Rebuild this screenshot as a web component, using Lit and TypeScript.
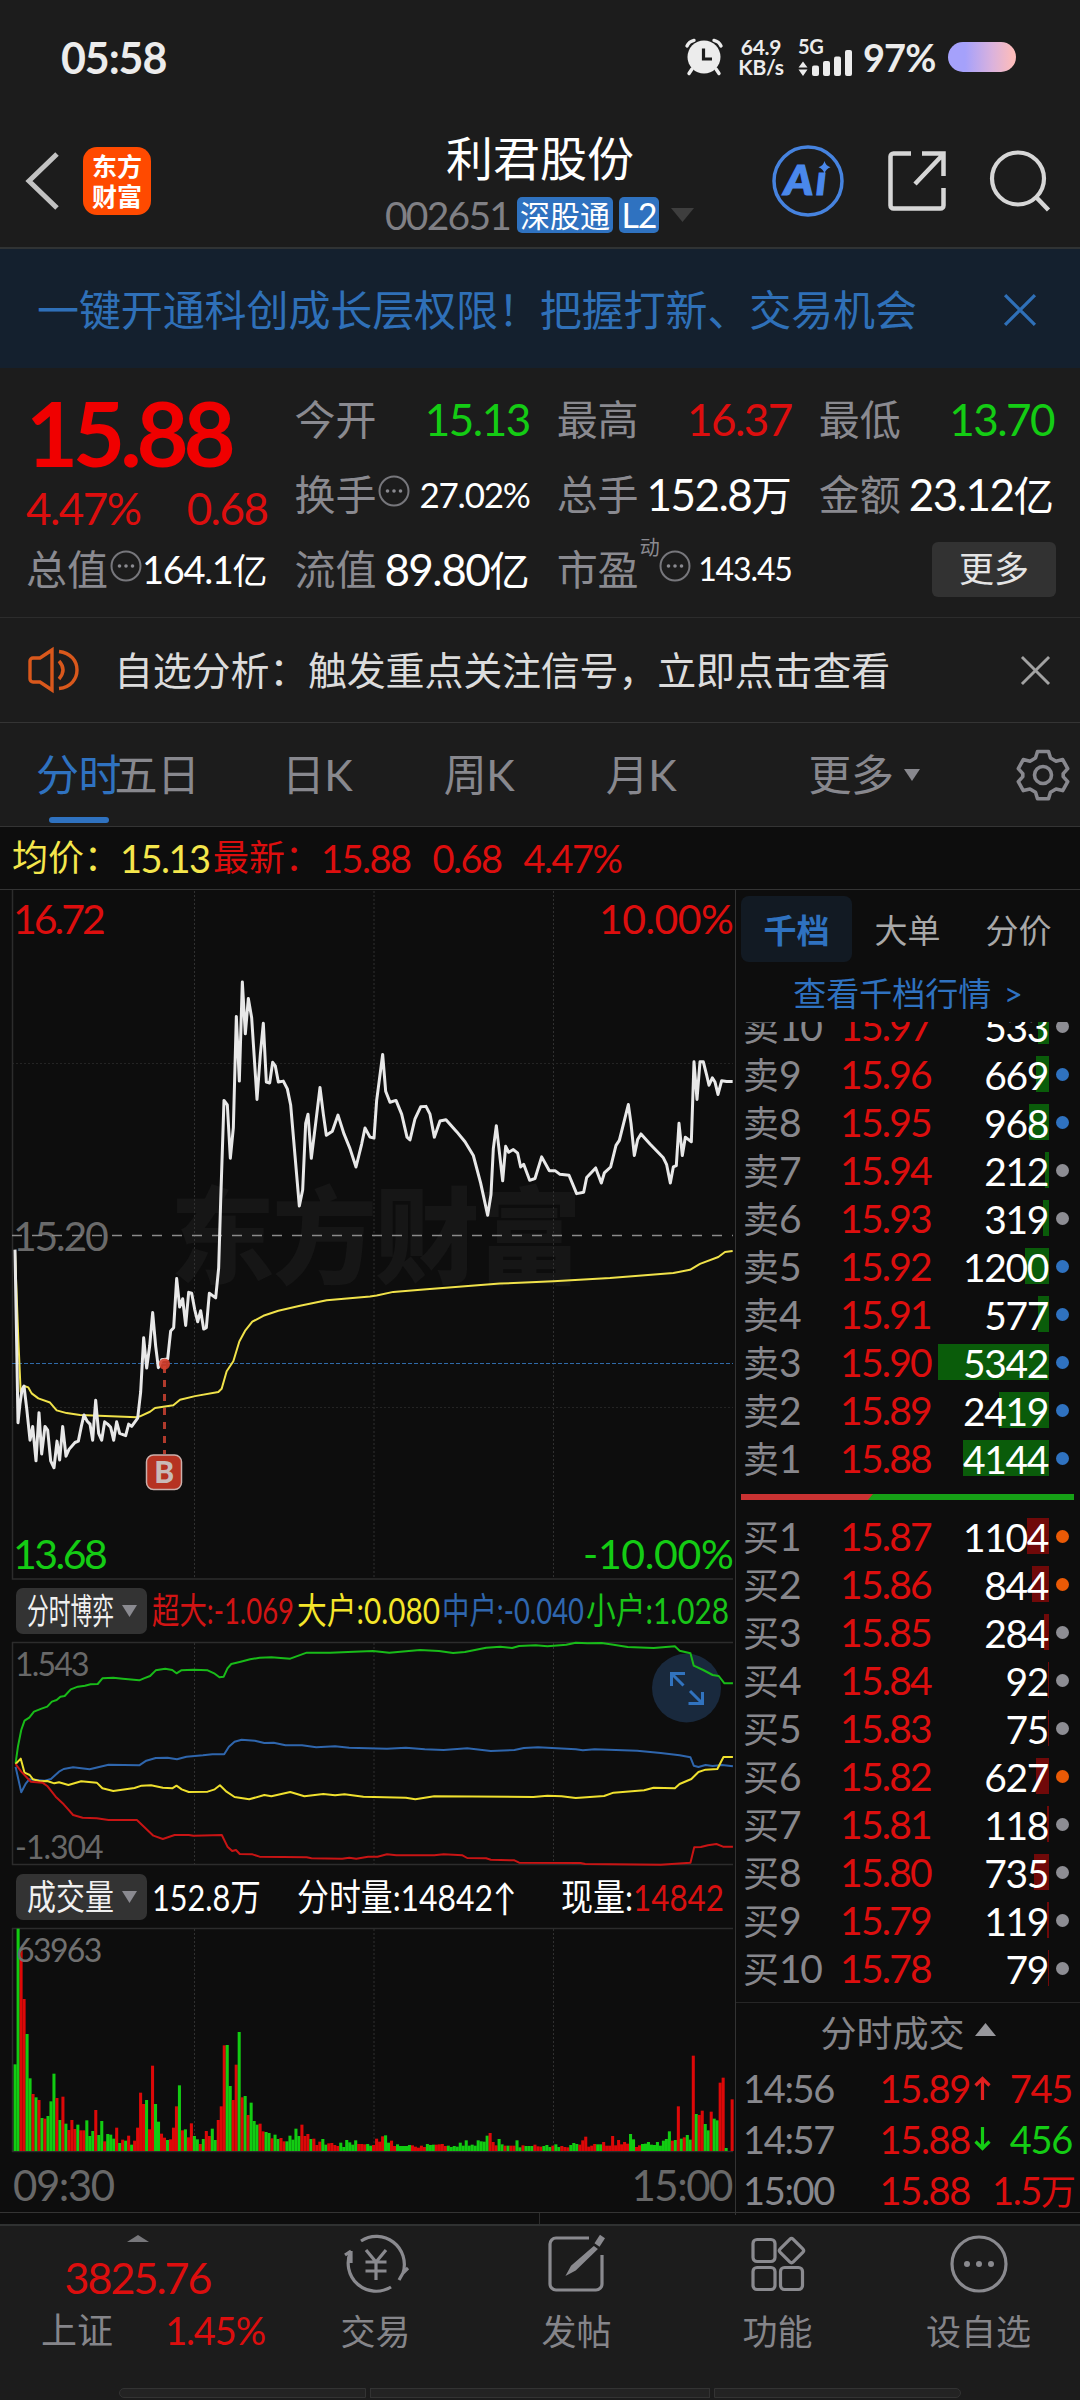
import { LitElement, html, css, svg, nothing } from "lit";
import { customElement, property } from "lit/decorators.js";
import { classMap } from "lit/directives/class-map.js";
import { styleMap } from "lit/directives/style-map.js";

/* ---------- shared ---------- */

const base = css`
  * { box-sizing: border-box; }
  :host { display: block; font-family: "Lato", "Noto Sans CJK SC", sans-serif; line-height: 1; white-space: nowrap; letter-spacing: -0.02em; }
  svg { display: block; flex: none; overflow: visible; }
  .han { font-size: 0.92em; letter-spacing: 0; }
  .red { color: #dc0e0e; }
  .green { color: #14cc14; }
  .white { color: #fff; }
`;

/** Wraps runs of Chinese characters so they can be sized against the digits. */
const mixed = (s: string) =>
  s.split(/([\u4e00-\u9fff]+)/).map((p) => (/[\u4e00-\u9fff]/.test(p) ? html`<span class="han">${p}</span>` : p));

/** Text squeezed to a given width. */
const fitted = (s: string, width: number, size: number, color: string, height = 46) => html`
  <svg width=${width} height=${height} style="display:block">
    <text x="0" y=${height / 2 + size * 0.37} font-size=${size} fill=${color} letter-spacing="0"
      textLength=${width} lengthAdjust="spacingAndGlyphs">${s}</text>
  </svg>`;

/* ---------- status bar ---------- */

@customElement("status-bar")
class StatusBar extends LitElement {
  static styles = [base, css`
    :host { display: flex; align-items: center; justify-content: space-between; height: 114px; padding: 0 64px 0 61px; color: #ececec; }
    .time { font-size: 43px; font-weight: 700; letter-spacing: -0.026em; }
    .right { display: flex; align-items: center; }
    .rate { width: 46px; margin-left: 15px; text-align: center; font-size: 21px; line-height: 20px; font-weight: 700; letter-spacing: -0.01em; }
    .signal { margin-left: 14px; }
    .pct { font-size: 38px; font-weight: 700; margin-left: 10px; width: 75px; letter-spacing: -0.025em; }
    .battery { width: 68px; height: 30px; margin-left: 10px; border-radius: 15px; background: linear-gradient(90deg, #a5a1fb 25%, #dab2dd 65%, #fcbcbc 95%); }
  `];
  render() {
    return html`
      <span class="time">05:58</span>
      <div class="right">
        <svg width="38" height="38" viewBox="0 0 38 38">
          <circle cx="19" cy="19" r="16.5" fill="#ececec" />
          <g stroke="#ececec" stroke-width="3.4" stroke-linecap="round" fill="none">
            <path d="M2 8 Q4 3.5 9 2.4M36 8 Q34 3.5 29 2.4M7 31 4 35.5M31 31l3 4.5" />
          </g>
          <path d="M18.5 10.5V21H27" fill="none" stroke="#1c1c1c" stroke-width="3.2" />
        </svg>
        <div class="rate">64.9<br />KB/s</div>
        <svg class="signal" width="55" height="38" viewBox="0 0 55 38">
          <text x="0" y="15.5" font-size="20" font-weight="700" fill="#ececec">5G</text>
          <g fill="#ececec">
            <path d="M5 23.500l4.500 6H.5zM5 38l4.500-6.500H.5z" />
            <rect x="14" y="27.500" width="7" height="10.500" rx="2" />
            <rect x="25" y="23" width="7" height="15" rx="2" />
            <rect x="36" y="18.500" width="7" height="19.500" rx="2" />
            <rect x="47" y="12" width="7" height="26" rx="2" />
          </g>
        </svg>
        <span class="pct">97%</span>
        <div class="battery"></div>
      </div>`;
  }
}

/* ---------- title bar ---------- */

@customElement("title-bar")
class TitleBar extends LitElement {
  static styles = [base, css`
    :host { display: grid; grid-template-columns: 385px 310px 1fr; height: 135px; border-bottom: 2px solid #303334; }
    .left { display: flex; align-items: center; padding: 0 0 0 26px; }
    .logo { display: grid; place-content: center; width: 68px; height: 68px; margin-left: 23px; border-radius: 14px; background: #ff4a00; color: #fff;
      font-size: 25px; line-height: 30px; font-weight: 700; text-align: center; letter-spacing: 0; }
    .mid { display: flex; flex-direction: column; align-items: center; padding-top: 20px; }
    .name { color: #fff; font-size: 47px; letter-spacing: 0; line-height: 48px; padding-right: 0; }
    .sub { display: flex; align-items: center; align-self: flex-start; margin-top: 15px; height: 36px; }
    .code { font-size: 39px; color: #808085; letter-spacing: -0.045em; width: 132px; }
    .tag { height: 36px; padding: 0 3px; border-radius: 5px; background: #2f72c0; color: #fff; font-size: 30px; line-height: 36px; letter-spacing: 0; margin-right: 6px; }
    .lv { font-size: 34px; width: 40px; padding: 0; text-align: center; letter-spacing: -0.03em; }
    .right { display: flex; align-items: center; gap: 44px; padding-left: 77px; }
  `];
  render() {
    return html`
      <div class="left">
        <svg width="34" height="58" viewBox="0 0 34 58"><path d="M31 2 3 29l28 27" fill="none" stroke="#c2c2c2" stroke-width="5" /></svg>
        <div class="logo">东方<br />财富</div>
      </div>
      <div class="mid">
        <span class="name">利君股份</span>
        <div class="sub">
          <span class="code">002651</span><span class="tag">深股通</span><span class="tag lv">L2</span>
          <svg width="23" height="14" style="margin-left:6px" viewBox="0 0 23 14"><path d="M0 0h23L11.500 14z" fill="#3e3e3e" /></svg>
        </div>
      </div>
      <div class="right">
        <svg width="72" height="72" viewBox="772 145 72 72">
          <circle cx="808" cy="181" r="34" fill="none" stroke="#4683df" stroke-width="3.500" />
          <g font-size="41" font-weight="900" font-style="italic" fill="#4a88ec" stroke="#4a88ec" stroke-width="1.200">
            <text x="784" y="194.500" textLength="29" lengthAdjust="spacingAndGlyphs">A</text>
            <text x="816" y="195">ı</text>
          </g>
          <path d="M824.500 161q1.200 4.800 6 6.200-4.800 1.400-6 6.800-1.200-5.400-6-6.800 4.800-1.400 6-6.200z" fill="#4a88ec" />
        </svg>
        <svg width="58" height="60" viewBox="0 0 58 60">
          <path d="M23 2.500H5.500a3 3 0 0 0-3 3v49a3 3 0 0 0 3 3h47a3 3 0 0 0 3-3V37M34 2.500h21.500V25M55 3.500 27 33" fill="none" stroke="#d6d6d6" stroke-width="4.500" />
        </svg>
        <svg width="60" height="62" viewBox="0 0 60 62" style="margin-left:0">
          <circle cx="28" cy="28.500" r="26" fill="none" stroke="#d6d6d6" stroke-width="4.200" />
          <path d="m46 47 12.500 13" stroke="#d6d6d6" stroke-width="4.500" />
        </svg>
      </div>`;
  }
}

/* ---------- quote summary ---------- */

interface Cell { label: string; value: string; tone?: string; size?: number; info?: boolean; sup?: string }

@customElement("quote-summary")
class QuoteSummary extends LitElement {
  static styles = [base, css`
    :host { display: grid; grid-template-columns: repeat(4, 1fr); column-gap: 27px; grid-template-rows: repeat(3, 75px); padding: 14px 26px 11px; height: 250px; align-items: center; border-bottom: 1px solid #2c2c2c; }
    .last { font-size: 90px; font-weight: 700; color: #f00000; letter-spacing: -0.057em; align-self: start; line-height: 100px; padding-left: 0; }
    .change { display: flex; justify-content: space-between; font-size: 44px; padding-top: 26px; letter-spacing: -0.035em; }
    .cell { display: flex; align-items: center; height: 75px; padding-bottom: 1px; }
    .label { font-size: 41px; color: #8a8a90; letter-spacing: 0; }
    .value { margin-left: auto; letter-spacing: -0.035em; }
    .sup { font-size: 20px; color: #8a8a90; align-self: flex-start; margin: 5px 0 0 1px; }
    .info { margin-left: 2px; }
    .sup + .info { margin-left: 0; }
    .more { justify-self: end; width: 124px; height: 55px; border-radius: 6px; background: #323232; color: #e4e4e4; font-size: 35px; line-height: 53px; text-align: center; letter-spacing: 0; margin-right: -2px; }
  `];
  private cell(c: Cell) {
    return html`<div class="cell">
      <span class="label">${c.label}</span>
      ${c.sup ? html`<span class="sup">${c.sup}</span>` : nothing}
      ${c.info
        ? html`<svg class="info" width="32" height="32" viewBox="0 0 32 32">
            <circle cx="16" cy="13" r="14.500" fill="none" stroke="#77777c" stroke-width="2" />
            <g fill="#8a8a90"><circle cx="9.500" cy="13" r="1.800" /><circle cx="16" cy="13" r="1.800" /><circle cx="22.500" cy="13" r="1.800" /></g></svg>`
        : nothing}
      <span class="value ${c.tone ?? "white"}" style=${styleMap({ fontSize: `${c.size ?? 44}px` })}>${mixed(c.value)}</span>
    </div>`;
  }
  render() {
    return html`
      <span class="last">15.88</span>
      ${this.cell({ label: "今开", value: "15.13", tone: "green" })}
      ${this.cell({ label: "最高", value: "16.37", tone: "red" })}
      ${this.cell({ label: "最低", value: "13.70", tone: "green" })}
      <div class="change red"><span>4.47%</span><span>0.68</span></div>
      ${this.cell({ label: "换手", value: "27.02%", size: 35, info: true })}
      ${this.cell({ label: "总手", value: "152.8万" })}
      ${this.cell({ label: "金额", value: "23.12亿" })}
      ${this.cell({ label: "总值", value: "164.1亿", size: 38, info: true })}
      ${this.cell({ label: "流值", value: "89.80亿" })}
      ${this.cell({ label: "市盈", value: "143.45", size: 32, info: true, sup: "动" })}
      <span class="more">更多</span>`;
  }
}

/* ---------- charts ---------- */

const GRID_X = [194.5, 374, 553.5];
const TICK = "#2c2c2c";

const verticals = (y1: number, y2: number) =>
  GRID_X.map((x) => svg`<line x1=${x} x2=${x} y1=${y1} y2=${y2} stroke="#303030" stroke-dasharray="2 2" />`);

const PRICE = "45,805 50,1010 54,1182 60,1140 66,1110 72,1102 80,1150 90,1220 98,1190 108,1265 117,1160 125,1250 135,1190 143,1198 152,1265 162,1280 171,1222 179,1263 188,1190 198,1255 207,1240 225,1225 235,1222 244,1190 252,1165 261,1178 270,1185 278,1220 287,1133 296,1205 305,1220 314,1180 323,1185 332,1192 341,1220 350,1180 359,1205 377,1210 386,1185 395,1190 413,1172 422,1115 431,997 440,1063 449,1015 458,942 467,1015 475,1062 485,1045 503,1043 512,982 521,975 530,868 539,930 548,912 557,970 566,898 575,900 584,935 593,962 602,938 611,978 619,975 628,900 647,910 656,845 662,700 672,480 682,490 691,606 700,540 709,297 718,438 727,222 736,335 745,258 755,300 771,478 781,380 790,312 799,440 809,442 818,397 826,405 835,440 850,438 862,455 872,490 885,600 898,710 908,675 917,530 924,510 934,606 947,530 960,452 970,510 979,556 997,547 1014,512 1032,553 1050,585 1068,625 1085,575 1095,540 1110,560 1122,562 1130,480 1148,380 1157,460 1170,484 1188,480 1205,510 1221,560 1230,566 1245,520 1262,494 1278,493 1290,510 1303,560 1320,525 1338,522 1370,548 1395,570 1420,600 1442,660 1463,730 1473,685 1480,585 1489,535 1508,655 1517,580 1526,593 1540,587 1553,595 1562,625 1571,619 1589,654 1605,650 1625,603 1648,633 1665,633 1680,641 1707,643 1730,683 1751,680 1760,648 1787,627 1804,660 1813,638 1832,625 1848,578 1858,567 1885,489 1893,530 1903,600 1913,565 1923,553 1950,575 1990,605 2000,620 2011,660 2020,625 2029,622 2037,530 2047,600 2056,560 2074,570 2082,396 2091,478 2100,396 2110,396 2120,425 2127,447 2137,431 2145,440 2154,467 2165,437 2180,439 2198,439";
const AVERAGE = "45,810 55,1000 62,1115 72,1102 85,1105 95,1118 115,1129 150,1138 170,1155 200,1161 240,1165 410,1170 420,1168 450,1158 465,1150 520,1144 540,1132 585,1124 655,1115 665,1108 680,1070 700,1048 718,1005 735,982 757,962 790,949 835,938 900,927 980,915 1110,907 1130,905 1180,897 1280,891 1500,879 1660,874 1830,867 2020,856 2070,849 2100,836 2155,821 2175,810 2198,808";

@customElement("price-chart")
class PriceChart extends LitElement {
  static styles = [base, css`
    .axis { font-size: 41px; letter-spacing: -0.02em; }
    .mark { font-size: 105px; font-weight: 900; letter-spacing: 0; }
    .series { vector-effect: non-scaling-stroke; fill: none; stroke-linejoin: round; }
  `];
  render() {
    return html`<svg width="735" height="690" viewBox="0 890 735 690">
      <text class="mark" x="170" y="1275" fill="#161616" textLength="412">东方财富</text>
      ${verticals(891, 1579)}
      <path d="M12 1063.500H733M12 1407.500H733" stroke="#242424" stroke-dasharray="2 2" />
      <path d="M12.500 890V1579H733" fill="none" stroke=${TICK} stroke-width="1.500" />
      <text class="axis" x="13" y="1251" fill="#6a6a6a" textLength="95">15.20</text>
      <path d="M12 1235.500H733" stroke="#8a8a8a" stroke-width="1.500" stroke-dasharray="10 10" />
      <path d="M12 1363.500H733" stroke="#2f6aa8" stroke-width="1.200" stroke-dasharray="4 2" />
      <g transform="translate(0 880) scale(0.33333 0.45918)">
        <polyline class="series" points=${AVERAGE} stroke="#f0e24a" stroke-width="2" />
        <polyline class="series" points=${PRICE} stroke="#e8e8e8" stroke-width="3" />
      </g>
      <path d="M164.500 1364V1454" stroke="#b03a2c" stroke-width="3" stroke-dasharray="7 7" stroke-dashoffset="-2" />
      <circle cx="164.500" cy="1364" r="5.500" fill="#d8402e" fill-opacity="0.9" />
      <rect x="146.500" y="1455" width="35" height="34.500" rx="7" fill="#b63322" stroke="#cbb0ac" stroke-width="1.500" />
      <text x="164" y="1482.500" font-size="30" font-weight="900" fill="#c9bab8" text-anchor="middle">B</text>
      <g class="axis">
        <text x="13" y="934" fill="#dc0e0e" textLength="92">16.72</text>
        <text x="733" y="934" fill="#dc0e0e" text-anchor="end" textLength="134">10.00%</text>
        <text x="13" y="1569" fill="#14cc14" textLength="94">13.68</text>
        <text x="733" y="1569" fill="#14cc14" text-anchor="end" textLength="150">-10.00%</text>
      </g>
    </svg>`;
  }
}

const FLOWS: [string, string][] = [
  ["#19bb19", "33,580 38,530 45,480 52,452 62,443 72,425 88,416 100,410 110,395 120,390 128,380 137,378 150,358 165,350 180,347 192,343 207,342 217,325 240,323 260,326 295,331 305,325 318,318 330,301 350,296 365,300 374,310 384,301 410,299 440,301 455,311 465,322 474,320 482,295 490,282 510,275 530,268 550,263 575,262 615,266 650,248 700,248 750,245 790,243 825,248 890,240 930,243 960,249 985,246 1030,233 1060,230 1085,234 1100,228 1135,226 1160,229 1200,224 1220,218 1245,220 1275,219 1300,224 1330,231 1385,234 1430,229 1440,242 1463,250 1470,287 1490,300 1510,315 1523,318 1535,340 1553,340"],
  ["#2f66ad", "33,590 45,667 55,640 62,628 95,632 108,627 125,605 135,597 155,592 190,598 230,584 295,586 310,572 330,564 355,563 375,568 395,560 430,556 450,553 475,553 485,530 497,515 512,509 540,512 560,519 580,518 605,526 640,526 670,532 710,529 740,533 820,536 860,533 900,538 940,540 990,535 1040,543 1090,540 1110,534 1140,532 1220,538 1235,541 1260,538 1350,542 1400,549 1440,556 1463,562 1470,587 1480,591 1495,585 1510,588 1530,585 1553,589"],
  ["#efe02e", "33,582 44,566 52,608 63,615 70,628 85,634 100,633 115,640 125,637 145,645 172,634 205,638 217,655 240,663 285,654 300,647 320,646 345,653 365,655 374,647 385,658 400,666 440,665 455,658 466,646 480,665 497,681 528,688 560,675 575,679 615,666 645,679 685,672 710,676 730,673 770,680 860,683 880,688 920,679 1130,681 1160,677 1190,679 1220,684 1280,678 1300,668 1365,661 1385,653 1430,655 1440,642 1465,627 1480,606 1495,599 1520,597 1533,561 1553,561"],
  ["#c81414", "33,582 45,605 52,615 65,635 90,638 100,648 118,680 135,703 155,735 175,743 205,745 230,750 290,750 305,770 325,797 345,807 370,795 400,795 410,797 470,795 482,830 492,843 500,840 508,852 535,853 550,860 650,862 660,865 725,866 740,863 755,866 780,860 800,860 820,853 840,856 920,856 940,853 980,856 990,864 1030,865 1040,869 1090,871 1100,878 1230,879 1240,882 1400,884 1463,878 1471,832 1485,831 1500,826 1518,822 1532,830 1553,830"],
];

@customElement("flow-chart")
class FlowChart extends LitElement {
  static styles = [base, css`
    .axis { font-size: 32px; letter-spacing: -0.02em; }
    .series { vector-effect: non-scaling-stroke; fill: none; stroke-linejoin: round; stroke-width: 2px; }
  `];
  render() {
    return html`<svg width="735" height="224" viewBox="0 1642 735 224">
      ${verticals(1643, 1864)}
      <path d="M12 1642.500H733M12 1864.500H733M12.500 1642V1865" stroke=${TICK} stroke-width="1.500" />
      <g fill="#686868" class="axis">
        <text x="15" y="1675.500" textLength="74">1.543</text>
        <text x="15" y="1858.500" textLength="88">-1.304</text>
      </g>
      <circle cx="686.500" cy="1688" r="34.500" fill="#19293d" />
      <g transform="translate(0 1570) scale(0.47194 0.33333)">
        ${FLOWS.map(([c, pts]) => svg`<polyline class="series" points=${pts} stroke=${c} />`)}
      </g>
      <g fill="none" stroke="#3173bf" stroke-width="3">
        <path d="M671.500 1686V1673.500H685M672 1674l11.500 11.500M702.500 1692v11.500H688.500M702 1703l-12-12" />
      </g>
    </svg>`;
  }
}

/** Bar heights per minute; the prefix is the bar's direction. */
const VOLUME = "g613 g206 r270 r417 g522 g655 r702 g712 r720 g774 r776 g768 g724 g641 r714 g780 r710 g791 r810 r780 r807 g794 r811 r811 g781 g828 g813 r750 g825 g783 r844 g822 g824 g836 r803 g849 r839 g842 r827 g854 r842 r803 r698 r732 g720 r808 r617 g732 g785 r821 r833 g840 r838 r803 r739 g676 r811 g808 r832 r790 g828 g838 r852 g837 r813 r828 g806 g840 r780 r739 r556 g555 g678 r720 r614 g516 r712 g708 r765 g728 g783 g794 r791 r814 g816 g819 r835 g824 g837 r834 r844 g844 g827 g839 g806 g828 r794 r828 r822 g837 r836 r855 r845 g837 g854 r850 r849 r855 r858 g848 g861 g840 g847 g854 g841 r852 r852 r853 g852 g857 r855 r836 r845 r829 g826 g848 r842 r858 g853 g858 g858 g858 g855 r856 r860 r863 r857 r861 g852 g855 g854 r854 r853 r852 r858 g857 g861 g858 g860 g848 g857 g841 g857 g854 g857 g841 g844 g845 g827 r819 r846 r856 g837 g853 r857 g857 r857 r857 g841 g862 r856 g858 g858 g858 r854 r859 r860 g858 g855 g861 r857 g853 g861 r858 r861 r862 g855 g849 g852 r854 r841 r830 r860 r857 r852 g853 g853 r846 r857 r857 r828 r856 r840 r853 r846 r851 g822 g838 r861 r856 g852 g851 g846 g854 g855 g846 g857 g842 g837 g814 r842 g840 r739 g836 r832 g825 g839 r587 g762 r765 r752 g792 g811 r755 g776 g781 r668 r653 g864 g873 r718"
  .split(" ").map((s) => ({ up: s[0] === "r", h: (873 - Number(s.slice(1))) / 3 }));

@customElement("volume-chart")
class VolumeChart extends LitElement {
  static styles = [base, css`
    .axis { font-size: 32px; }
    .time { display: flex; justify-content: space-between; padding: 12px 3px 0 13px; height: 61px; font-size: 42px; color: #686868; letter-spacing: -0.035em; }
  `];
  render() {
    return html`<svg width="735" height="224" viewBox="0 1928 735 224">
      ${verticals(1929, 2151)}
      <path d="M12 1928.500H733M12 2151.500H733M12.500 1928V2152" stroke=${TICK} stroke-width="1.500" />
      ${VOLUME.map((b, i) => svg`<rect x=${13.6 + i * 2.9875} width="3.05" y=${2151 - b.h} height=${b.h} fill=${b.up ? "#dd0808" : "#12cc12"} />`)}
      <text class="axis" x="16" y="1961.500" fill="#707070" textLength="86">63963</text>
    </svg>
    <div class="time"><span>09:30</span><span>15:00</span></div>`;
  }
}

/* ---------- order book ---------- */

type Dot = "b" | "g" | "o";
type Level = [name: string, price: string, vol: number, bar: number, dot: Dot];
const SELL: Level[] = [
  ["卖10", "15.97", 533, 11, "g"], ["卖9", "15.96", 669, 13, "b"], ["卖8", "15.95", 968, 20, "b"], ["卖7", "15.94", 212, 4, "g"],
  ["卖6", "15.93", 319, 6, "g"], ["卖5", "15.92", 1200, 24, "b"], ["卖4", "15.91", 577, 11, "b"], ["卖3", "15.90", 5342, 111, "b"],
  ["卖2", "15.89", 2419, 50, "b"], ["卖1", "15.88", 4144, 86, "b"],
];
const BUY: Level[] = [
  ["买1", "15.87", 1104, 22, "o"], ["买2", "15.86", 844, 17, "o"], ["买3", "15.85", 284, 5, "g"], ["买4", "15.84", 92, 1, "g"],
  ["买5", "15.83", 75, 1, "g"], ["买6", "15.82", 627, 13, "o"], ["买7", "15.81", 118, 2, "g"], ["买8", "15.80", 735, 15, "g"],
  ["买9", "15.79", 119, 2, "g"], ["买10", "15.78", 79, 1, "g"],
];

@customElement("order-book")
class OrderBook extends LitElement {
  @property({ attribute: false }) sell = SELL;
  @property({ attribute: false }) buy = BUY;
  static styles = [base, css`
    :host { width: 345px; border-left: 1px solid #333; }
    .tabs { display: grid; grid-template-columns: repeat(3, 111px); padding: 6px 0 0 5px; font-size: 33px; letter-spacing: 0; color: #a8a8a8; text-align: center; }
    .tabs span { height: 66px; line-height: 68px; border-radius: 8px; }
    .tabs .on { background: #121a23; color: #2f72c0; font-weight: 700; }
    .link { height: 60px; line-height: 62px; text-align: center; font-size: 33px; letter-spacing: 0; color: #2f72c0; word-spacing: 4px; }
    .sells { height: 460px; overflow: hidden; display: flex; flex-direction: column; justify-content: flex-end; }
    .row { display: grid; grid-template-columns: 92px 96px 118px 1fr; align-items: center; height: 48px; flex: none; padding-left: 7px; font-size: 39px; }
    .name { color: #87878c; letter-spacing: -0.03em; }
    .price { text-align: right; letter-spacing: -0.045em; }
    .vol { position: relative; height: 48px; line-height: 50px; text-align: right; color: #fff; padding-right: 1px; letter-spacing: -0.035em; }
    .bar { position: absolute; right: 0; top: 6px; height: 36px; }
    .num { position: relative; }
    .s .bar { background: #0a5c0a; }
    .y .bar { background: #700909; }
    .dot { width: 13px; height: 13px; border-radius: 50%; margin-left: 7px; }
    .b { background: #2f72c0; }
    .g { background: #8d8d93; }
    .o { background: #ea5a06; }
    .ratio { margin: 12px 0 12px 5px; }
    .deals { margin-top: 10px; border-top: 1px solid #262626; }
    .head { display: flex; align-items: center; justify-content: center; gap: 10px; height: 59px; font-size: 36px; letter-spacing: 0; color: #85858a; padding-right: -2px; }
    .deal { display: grid; grid-template-columns: 120px 107px 22px 1fr; align-items: center; height: 51px; padding: 0 8px 0 7px; font-size: 38px; letter-spacing: -0.035em; }
    .deal .at { color: #87878c; }
    .deal .r { text-align: right; }
    .deal svg { margin-left: 4px; }
  `];
  private level = (side: string) => ([name, price, vol, bar, dot]: Level) => html`
    <div class="row ${side}">
      <span class="name">${mixed(name)}</span>
      <span class="price red">${price}</span>
      <span class="vol"><i class="bar" style=${styleMap({ width: `${bar}px` })}></i><span class="num">${vol}</span></span>
      <i class=${classMap({ dot: true, [dot]: true })}></i>
    </div>`;
  private deal(at: string, price: string, vol: string, tone: string, dir?: "up" | "down") {
    return html`<div class="deal">
      <span class="at">${at}</span><span class="r red">${price}</span>
      ${dir
        ? html`<svg width="17" height="24" viewBox="0 0 17 24"><path d=${dir === "up" ? "M8.500 24V3M1.500 9.500l7-7 7 7" : "M8.500 0v21M1.500 14.500l7 7 7-7"} fill="none" stroke=${dir === "up" ? "#e02020" : "#14cc14"} stroke-width="3.200" /></svg>`
        : html`<span></span>`}
      <span class="r ${tone}">${mixed(vol)}</span>
    </div>`;
  }
  render() {
    return html`
      <div class="tabs"><span class="on">千档</span><span>大单</span><span>分价</span></div>
      <div class="link">查看千档行情 &gt;</div>
      <div class="sells">${this.sell.map(this.level("s"))}</div>
      <svg class="ratio" width="333" height="6" viewBox="0 0 333 6">
        <rect x="127" width="206" height="6" fill="#16a016" /><path d="M0 0h132l-5 6H0z" fill="#c93232" />
      </svg>
      <div>${this.buy.map(this.level("y"))}</div>
      <div class="deals">
        <div class="head">分时成交<svg width="21" height="13" viewBox="0 0 21 13" style="margin-top:-6px"><path d="M10.500 0 21 13H0z" fill="#97979c" /></svg></div>
        ${this.deal("14:56", "15.89", "745", "red", "up")}
        ${this.deal("14:57", "15.88", "456", "green", "down")}
        ${this.deal("15:00", "15.88", "1.5万", "red")}
      </div>`;
  }
}

/* ---------- bottom bar ---------- */

@customElement("bottom-bar")
class BottomBar extends LitElement {
  static styles = [base, css`
    :host { background: #1c1c1c; border-top: 2px solid #303232; height: 176px; }
    .bar { display: grid; grid-template-columns: 275px repeat(4, 201px); height: 162px; }
    .index { display: flex; flex-direction: column; align-items: center; padding-top: 9px; }
    .pts { font-size: 43px; letter-spacing: -0.045em; margin-top: 13px; line-height: 46px; }
    .line { display: flex; justify-content: space-between; align-items: center; width: 223px; margin: 7px 0 0 31px; align-self: stretch; font-size: 38px; line-height: 44px; letter-spacing: -0.03em; width: auto; padding: 0 10px 0 10px; }
    .line .n { font-size: 36px; color: #85858a; letter-spacing: 0; }
    .item { display: flex; flex-direction: column; align-items: center; color: #85858a; font-size: 35px; letter-spacing: 0; padding-top: 5px; }
    .item svg { margin-bottom: 17px; }
    .home { display: flex; gap: 4px; margin: 0 119px; height: 10px; }
    .home i { height: 10px; background: #232323; border: 1px solid #333; }
    .home i:nth-child(1) { width: 247px; border-radius: 5px 0 0 5px; }
    .home i:nth-child(2) { width: 340px; }
    .home i:nth-child(3) { width: 247px; border-radius: 0 5px 5px 0; }
  `];
  private item(icon: unknown, label: string) {
    return html`<div class="item">
      <svg width="66" height="66" viewBox="0 0 66 66" fill="none" stroke="#8a8a8f" stroke-width="3.200">${icon}</svg><span>${label}</span>
    </div>`;
  }
  render() {
    return html`
      <div class="bar">
        <div class="index">
          <svg width="22" height="7" viewBox="0 0 22 7"><path d="M11 0 22 7H0z" fill="#77777b" /></svg>
          <span class="pts red">3825.76</span>
          <div class="line"><span class="n">上证</span><span class="red">1.45%</span></div>
        </div>
        ${this.item(svg`
          <path d="M18 10A28 28 0 0 1 60 42M60 42l-4 7M60 42l5-5M48 56A28 28 0 0 1 8 20M8 20l-6 4M8 20V32" />
          <path d="M23 19l10 12 10-12M33 31V49M22.500 31h21M22.500 40h21" />`, "交易")}
        ${this.item(svg`
          <path d="M45 7H12a6 6 0 0 0-6 6V53a6 6 0 0 0 6 6H52a6 6 0 0 0 6-6V24" />
          <path d="M58.500 5.500 53 14" stroke-width="6" /><path d="M50 16.500 28 35.500 24.500 42l6.500-3.500L52 18z" fill="#8a8a8f" stroke-width="2.500" />`, "发帖")}
        ${this.item(svg`
          <rect x="8" y="8.500" width="22" height="22" rx="4" /><rect x="8" y="36.500" width="22" height="22" rx="4" /><rect x="35.500" y="36.500" width="22" height="22" rx="4" />
          <rect x="37.300" y="10.300" width="18.500" height="18.500" rx="2.500" transform="rotate(45 46.500 19.500)" />`, "功能")}
        ${this.item(svg`
          <circle cx="33" cy="33" r="27" /><g fill="#8a8a8f" stroke="none"><circle cx="21" cy="33" r="3" /><circle cx="33" cy="33" r="3" /><circle cx="45" cy="33" r="3" /></g>`, "设自选")}
      </div>
      <div class="home"><i></i><i></i><i></i></div>`;
  }
}

/* ---------- page ---------- */

@customElement("app-root")
class AppRoot extends LitElement {
  static styles = [base, css`
    :host { width: 1080px; height: 2400px; overflow: hidden; background: #1c1c1c; }
    .banner { display: flex; align-items: center; justify-content: space-between; height: 119px; padding: 3px 44px 0 37px; background: #14202e; color: #2f70b8; font-size: 42px; letter-spacing: -0.1px; }
    .notice { display: flex; align-items: center; height: 105px; padding: 0 30px 0 28px; font-size: 39px; letter-spacing: -0.2px; color: #dcdcdc; border-bottom: 1px solid #343434; }
    .notice span { flex: 1; padding-left: 33px; }
    .tabs { display: grid; grid-template-columns: 78px 158px 162px 162px 162px 1fr 74px; justify-items: center; align-items: center; height: 104px; font-size: 43px; letter-spacing: -0.5px; color: #88888e; border-bottom: 1px solid #343434; }
    .tab { position: relative; line-height: 98px; }
    .tab.on { color: #2f72c0; }
    .tab.on::after { content: ""; position: absolute; left: 50%; bottom: 1px; width: 60px; height: 6px; margin-left: -30px; border-radius: 3px; background: #2f72c0; }
    .more { display: flex; align-items: center; gap: 10px; line-height: 98px; }
    .legend { display: flex; align-items: center; height: 63px; padding-left: 12px; background: #0d0d0d; font-size: 38px; letter-spacing: -0.04em; border-bottom: 1px solid #343434; }
    .legend .han { font-size: 36px; letter-spacing: 0; }
    .avg { color: #f4e64c; width: 201px; display: flex; justify-content: space-between; padding-right: 11px; }
    .new { display: flex; }
    .board { display: grid; grid-template-columns: 735px 345px; height: 1323px; background: #0d0d0d; border-bottom: 1px solid #343434; }
    .strip { display: flex; align-items: center; height: 62px; padding: 0 0 0 16px; }
    .chip { display: flex; align-items: center; justify-content: space-between; width: 131px; height: 46px; padding: 0 10px 0 11px; border-radius: 7px; background: #333; margin-right: 5px; }
    .gap { display: grid; grid-template-columns: 1fr 1fr; height: 11px; background: #0d0d0d; }
    .gap i { border-right: 1px solid #2c2c2c; }
  `];
  private cross(size: number, color: string) {
    return html`<svg width=${size} height=${size} viewBox="0 0 30 30"><path d="M1 1 29 29M29 1 1 29" stroke=${color} stroke-width="3" /></svg>`;
  }
  private chip(label: string) {
    return html`<div class="chip">${fitted(label, 87, 35, "#f0f0f0")}
      <svg width="15" height="12" viewBox="0 0 15 12"><path d="M0 0h15L7.500 12z" fill="#8a8a90" /></svg></div>`;
  }
  render() {
    return html`
      <status-bar></status-bar>
      <title-bar></title-bar>
      <div class="banner"><span>一键开通科创成长层权限！把握打新、交易机会</span>${this.cross(32, "#2f70b8")}</div>
      <quote-summary></quote-summary>
      <div class="notice">
        <svg width="53" height="44" viewBox="0 0 53 44" fill="none" stroke="#d9581c" stroke-width="3.400">
          <path d="M24 2 12 10H5a3 3 0 0 0-3 3V31a3 3 0 0 0 3 3h7l12 8z" /><path d="M31 13q8 9 0 18M31 3.500C55 6 55 38 31 40.500" />
        </svg>
        <span>自选分析：触发重点关注信号，立即点击查看</span>${this.cross(29, "#a2a2a2")}
      </div>
      <div class="tabs">
        <span class="tab on" style="margin-left:79px">分时</span><span class="tab">五日</span><span class="tab">日K</span><span class="tab">周K</span><span class="tab">月K</span>
        <span class="more">更多<svg width="16" height="12" viewBox="0 0 16 12"><path d="M0 0h16L8 12z" fill="#88888e" /></svg></span>
        <svg width="52" height="52" viewBox="0 0 52 52" fill="none" stroke="#88888e" stroke-width="3.600" stroke-linejoin="round">
          <path d="M20.500 2.500h11l2 6.500 5.500 3.200 6.700-1.600 5 9-4.500 5v3l4.500 5-5 9-6.700-1.600-5.500 3.200-2 6.500h-11l-2-6.500-5.500-3.200-6.700 1.600-5-9 4.500-5v-3l-4.500-5 5-9 6.700 1.600 5.500-3.200z" />
          <circle cx="26" cy="26" r="8.500" />
        </svg>
      </div>
      <div class="legend">
        <span class="avg"><span class="han">均价：</span><span>15.13</span></span>
        <span class="new red"><span class="han">最新：</span><span>15.88</span><span style="margin-left:22px">0.68</span><span style="margin-left:22px">4.47%</span></span>
      </div>
      <div class="board">
        <div>
          <price-chart></price-chart>
          <div class="strip">
            ${this.chip("分时博弈")}
            ${fitted("超大:-1.069", 142, 36, "#d01414")}<i style="width:3px"></i>
            ${fitted("大户:0.080", 143, 36, "#f4e62a")}<i style="width:2px"></i>
            ${fitted("中户:-0.040", 142, 36, "#2f66ad")}<i style="width:2px"></i>
            ${fitted("小户:1.028", 143, 36, "#19c419")}
          </div>
          <flow-chart></flow-chart>
          <div class="strip">
            ${this.chip("成交量")}
            ${fitted("152.8万", 109, 37, "#fff")}<i style="width:36px"></i>
            ${fitted("分时量:14842↑", 220, 37, "#fff")}<i style="width:44px"></i>
            ${fitted("现量:", 72, 37, "#fff")}${fitted("14842", 91, 37, "#d81010")}
          </div>
          <volume-chart></volume-chart>
        </div>
        <order-book></order-book>
      </div>
      <div class="gap"><i></i><span></span></div>
      <bottom-bar></bottom-bar>`;
  }
}
